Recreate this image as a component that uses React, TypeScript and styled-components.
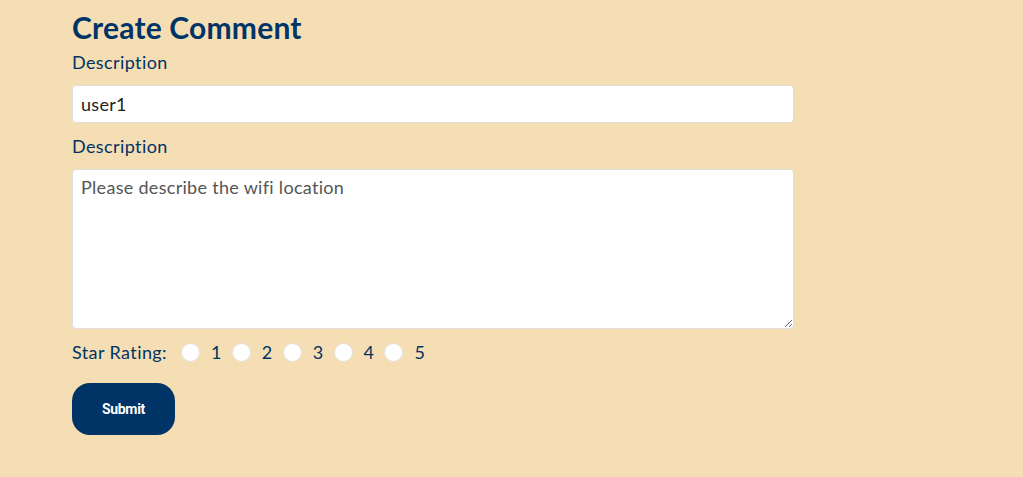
import React, { ReactElement } from 'react'
import styled, { createGlobalStyle } from 'styled-components'

const GlobalStyle = createGlobalStyle`
  html, body {
    margin: 0;
    padding: 0;
    background: #f5deb3;
  }
  body {
    font-family: Lato, 'Noto Sans', sans-serif;
    color: #003366;
  }
`

const Page = styled.div`
  padding: 8px 0 0 72px;
  width: 722px;
`

const Title = styled.h1`
  margin: 0 0 4px;
  font-size: 30px;
  line-height: 38px;
  font-weight: 700;
  letter-spacing: 0.2px;
  color: #003366;
`

const Field = styled.div`
  display: flex;
  flex-direction: column;
  margin-bottom: 11px;
`

const Label = styled.label`
  font-size: 18px;
  line-height: 24px;
  letter-spacing: 0.4px;
  margin-bottom: 11px;
`

const TextInput = styled.input`
  box-sizing: border-box;
  width: 100%;
  height: 38px;
  padding: 0 8px;
  border: 1px solid #dedede;
  border-radius: 4px;
  background: #fff;
  font-family: inherit;
  font-size: 18px;
  letter-spacing: 0.3px;
  color: #222;
  outline: none;
`

const TextArea = styled.textarea`
  box-sizing: border-box;
  width: 100%;
  height: 160px;
  padding: 6px 8px;
  border: 1px solid #dedede;
  border-radius: 4px;
  background: #fff;
  font-family: inherit;
  font-size: 18px;
  letter-spacing: 0.3px;
  outline: none;

  &::placeholder {
    color: #555;
  }
`

const RatingRow = styled.div`
  display: flex;
  align-items: center;
  font-size: 18px;
  line-height: 24px;
  letter-spacing: 0.4px;
  margin-top: 3px;
  margin-bottom: 19px;
`

const RatingLabel = styled.span`
  margin-right: 14px;
`

const Option = styled.label`
  display: flex;
  align-items: center;
  gap: 11px;
  margin-right: 10px;
`

const Radio = styled.input`
  appearance: none;
  margin: 0;
  width: 19px;
  height: 19px;
  border-radius: 50%;
  background: #fff;
  border: 1px solid #e4e4e4;
`

const SubmitButton = styled.button`
  width: 103px;
  height: 52px;
  border: none;
  border-radius: 18px;
  background: #003366;
  color: #fff;
  font-family: Roboto, 'Noto Sans', sans-serif;
  font-size: 14px;
  font-weight: 700;
  letter-spacing: -0.3px;
  cursor: pointer;
`

export default (): ReactElement => (
  <>
    <GlobalStyle />
    <Page>
      <Title>Create Comment</Title>
      <Field>
        <Label>Description</Label>
        <TextInput defaultValue='user1' />
      </Field>
      <Field>
        <Label>Description</Label>
        <TextArea placeholder='Please describe the wifi location' />
      </Field>
      <RatingRow>
        <RatingLabel>Star Rating:</RatingLabel>
        {[1, 2, 3, 4, 5].map(n => (
          <Option key={n}>
            <Radio type='radio' name='rating' value={n} />
            {n}
          </Option>
        ))}
      </RatingRow>
      <SubmitButton>Submit</SubmitButton>
    </Page>
  </>
)
